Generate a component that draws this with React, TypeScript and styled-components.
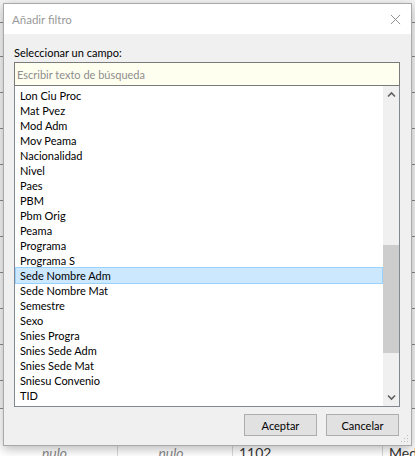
// Añadir filtro dialog

// ___________________________________________________________________

import * as React from 'react'
import styled, { createGlobalStyle } from 'styled-components'

// ___________________________________________________________________

const fields = [
  'Lon Ciu Proc',
  'Mat Pvez',
  'Mod Adm',
  'Mov Peama',
  'Nacionalidad',
  'Nivel',
  'Paes',
  'PBM',
  'Pbm Orig',
  'Peama',
  'Programa',
  'Programa S',
  'Sede Nombre Adm',
  'Sede Nombre Mat',
  'Semestre',
  'Sexo',
  'Snies Progra',
  'Snies Sede Adm',
  'Snies Sede Mat',
  'Sniesu Convenio',
  'TID',
]

const selected = 'Sede Nombre Adm'

const Global = createGlobalStyle`
  html, body {
    margin: 0;
    padding: 0;
    background: #fff;
  }
  body {
    font-family: Lato, "Noto Sans", sans-serif;
    font-size: 11px;
    color: #000;
  }
`

const App = () => (
  <Page>
    <Global />
    <Backdrop>
      <BackRow h={23} />
      <BackRow h={34} />
      <BackRow h={36} />
      <BackRow h={36} />
      <BackRow h={36} />
      <BackRow h={36} />
      <BackRow h={36} />
      <BackRow h={36} />
      <BackRow h={36} />
      <BackRow h={36} />
      <BackRow h={36} />
      <BackRow h={28} />
      <BackCells>
        <Cell w={118} italic>nulo</Cell>
        <Cell w={115} italic>nulo</Cell>
        <Cell w={150}>1102</Cell>
        <Cell w={32}>Med</Cell>
      </BackCells>
    </Backdrop>

    <Window>
      <TitleBar>
        <Title>Añadir filtro</Title>
        <Close viewBox="0 0 12 12">
          <path d="M1 1 L11 11 M11 1 L1 11" />
        </Close>
      </TitleBar>

      <Body>
        <Label>Seleccionar un campo:</Label>
        <Search placeholder="Escribir texto de búsqueda" />
        <ListBox>
          <Rows>
            {fields.map((f) => (
              <Row key={f} active={f === selected}>
                {f}
              </Row>
            ))}
          </Rows>
          <ScrollBar>
            <Arrow viewBox="0 0 9 6">
              <path d="M1 5 L4.5 1.5 L8 5" />
            </Arrow>
            <Track>
              <Thumb />
            </Track>
            <Arrow viewBox="0 0 9 6">
              <path d="M1 1 L4.5 4.5 L8 1" />
            </Arrow>
          </ScrollBar>
        </ListBox>

        <Footer>
          <Button>Aceptar</Button>
          <Button>Cancelar</Button>
        </Footer>
      </Body>

      <Grip viewBox="0 0 8 8">
        <rect x="6" y="0" width="1" height="1" />
        <rect x="3" y="3" width="1" height="1" />
        <rect x="6" y="3" width="1" height="1" />
        <rect x="0" y="6" width="1" height="1" />
        <rect x="3" y="6" width="1" height="1" />
        <rect x="6" y="6" width="1" height="1" />
      </Grip>
    </Window>
  </Page>
)

export default App

// ___________________________________________________________________

const Page = styled.div`
  position: relative;
  width: 415px;
  height: 456px;
  overflow: hidden;
  background: #fff;
`

const Backdrop = styled.div`
  display: flex;
  flex-direction: column;
  width: 415px;
  height: 456px;
  background: #f4f4f4;
`

const BackRow = styled.div<{ h: number }>`
  height: ${(p) => p.h}px;
  flex: none;
  border-bottom: 1px solid #8a8a8a;
  box-sizing: border-box;
`

const BackCells = styled.div`
  display: flex;
  flex: 1;
  background: #fff;
  padding-top: 36px;
  overflow: hidden;
`

const Cell = styled.div<{ w: number; italic?: boolean }>`
  width: ${(p) => p.w}px;
  flex: none;
  box-sizing: border-box;
  border-right: 1px solid #d8d8d8;
  padding: ${(p) => (p.italic ? '0 8px 0 0' : '0 0 0 6px')};
  text-align: ${(p) => (p.italic ? 'center' : 'left')};
  font-style: ${(p) => (p.italic ? 'italic' : 'normal')};
  color: ${(p) => (p.italic ? '#888' : '#333')};
  font-size: 14px;
  line-height: 16px;
  white-space: nowrap;
  overflow: hidden;
  &:last-child {
    border-right: none;
  }
`

const Window = styled.div`
  position: absolute;
  left: 3px;
  top: 3px;
  width: 409px;
  height: 443px;
  box-sizing: border-box;
  border: 1px solid #a9a9a9;
  background: #f0f0f0;
  box-shadow: 0 3px 10px rgba(0, 0, 0, 0.28);
  display: flex;
  flex-direction: column;
`

const TitleBar = styled.div`
  height: 30px;
  flex: none;
  background: #fff;
  display: flex;
  align-items: center;
  justify-content: space-between;
  padding: 0 10px 0 8px;
`

const Title = styled.span`
  color: #999;
  font-size: 11.5px;
  margin-top: 1px;
`

const Close = styled.svg`
  width: 11px;
  height: 11px;
  fill: none;
  stroke: #888;
  stroke-width: 1;
`

const Body = styled.div`
  flex: 1;
  display: flex;
  flex-direction: column;
  padding: 11px 11px 0 10px;
`

const Label = styled.div`
  line-height: 15px;
  margin-bottom: 2px;
`

const Search = styled.input`
  height: 24px;
  box-sizing: border-box;
  border: 1px solid #7a7a7a;
  background: #fffff0;
  padding: 0 2px;
  font: inherit;
  font-size: 11px;
  outline: none;
  &::placeholder {
    color: #8d8d8d;
  }
`

const ListBox = styled.div`
  height: 321px;
  box-sizing: border-box;
  border: 1px solid #828790;
  border-top: none;
  background: #fff;
  display: flex;
`

const Rows = styled.div`
  flex: 1;
  padding: 2px 1px 0 1px;
  overflow: hidden;
`

const Row = styled.div<{ active?: boolean }>`
  height: 15px;
  line-height: 15px;
  padding-left: 4px;
  box-sizing: border-box;
  white-space: nowrap;
  background: ${(p) => (p.active ? '#cce8ff' : 'transparent')};
  outline: ${(p) => (p.active ? '1px solid #99d1ff' : 'none')};
`

const ScrollBar = styled.div`
  width: 16px;
  flex: none;
  background: #f0f0f0;
  display: flex;
  flex-direction: column;
  align-items: center;
`

const Arrow = styled.svg`
  width: 9px;
  height: 17px;
  flex: none;
  fill: none;
  stroke: #606060;
  stroke-width: 1.6;
  padding: 5px 0;
  box-sizing: border-box;
`

const Track = styled.div`
  flex: 1;
  width: 100%;
  padding-top: 142px;
`

const Thumb = styled.div`
  height: 108px;
  width: 100%;
  background: #cdcdcd;
`

const Footer = styled.div`
  display: flex;
  justify-content: flex-end;
  gap: 9px;
  padding: 7px 1px 0 0;
`

const Button = styled.button`
  width: 73px;
  height: 22px;
  box-sizing: border-box;
  border: 1px solid #adadad;
  background: #e1e1e1;
  font: inherit;
  font-size: 11px;
  color: #000;
  padding: 0;
`

const Grip = styled.svg`
  position: absolute;
  right: 2px;
  bottom: 2px;
  width: 8px;
  height: 8px;
  fill: #bdbdbd;
`
